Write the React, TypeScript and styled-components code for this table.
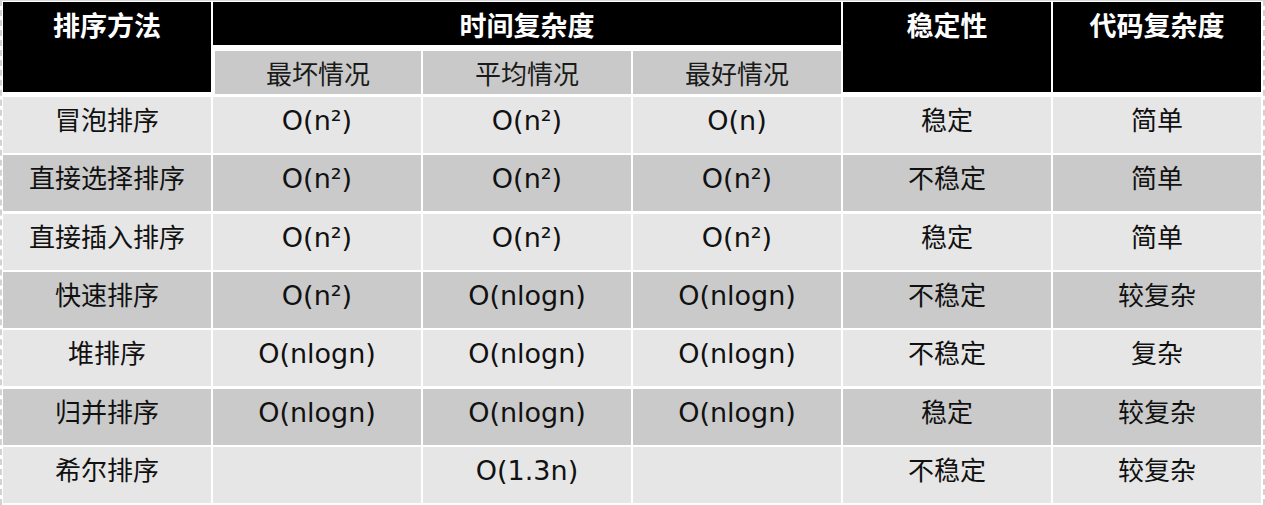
import React from 'react'
import styled, { createGlobalStyle } from 'styled-components'

const colWidth = 208;

const GlobalStyle = createGlobalStyle`
  html, body {
    margin: 0;
    background: #fff;
  }
`

const Page = styled.div`
  width: 1265px;
  height: 505px;
  box-sizing: border-box;
  border-top: 1px solid #d9d9d9;
  border-left: 2px dashed #d2d2d2;
  border-right: 2px dashed #d2d2d2;
  padding: 1px 0 0 1px;
  font-family: "DejaVu Sans", "Noto Sans CJK SC", sans-serif;
  overflow: hidden;
`

const Head = styled.div`
  display: grid;
  grid-template-columns: repeat(6, ${colWidth}px);
  grid-template-rows: 43px 43px;
  column-gap: 2px;
  row-gap: 6px;
`

const HeadCell = styled.div<{ $col: number; $span?: number; $rows?: number }>`
  grid-column: ${p => p.$col} / span ${p => p.$span ?? 1};
  grid-row: 1 / span ${p => p.$rows ?? 1};
  background: #000;
  color: #fff;
  font-family: "Noto Sans CJK SC", serif;
  font-weight: 700;
  font-size: 27px;
  line-height: 1;
  text-align: center;
  padding-top: 9px;
  ${p => p.$rows === 2 && 'margin-bottom: 2px;'}
`

const SubCell = styled.div<{ $col: number }>`
  grid-column: ${p => p.$col};
  grid-row: 2;
  background: #c9c9c9;
  color: #1a1a1a;
  font-family: "Noto Sans CJK SC", serif;
  font-size: 26px;
  line-height: 1;
  text-align: center;
  padding-top: 9px;
  margin-left: ${p => (p.$col === 2 ? 2 : 0)}px;
`

const Body = styled.div`
  display: grid;
  grid-template-columns: repeat(6, ${colWidth}px);
  grid-auto-rows: 56px;
  column-gap: 2px;
  row-gap: 2.35px;
  margin-top: 3px;
`

const Cell = styled.div<{ $dark: boolean; $latin?: boolean }>`
  background: ${p => (p.$dark ? '#cacaca' : '#e6e6e6')};
  color: #111;
  text-align: center;
  line-height: 1;
  ${p => p.$latin
    ? 'font-family: "DejaVu Sans", sans-serif; font-size: 27px; padding-top: 10px;'
    : 'font-family: "Noto Sans CJK SC", serif; font-size: 26px; padding-top: 9px;'}
`

const rows: string[][] = [
  ['冒泡排序', 'O(n²)', 'O(n²)', 'O(n)', '稳定', '简单'],
  ['直接选择排序', 'O(n²)', 'O(n²)', 'O(n²)', '不稳定', '简单'],
  ['直接插入排序', 'O(n²)', 'O(n²)', 'O(n²)', '稳定', '简单'],
  ['快速排序', 'O(n²)', 'O(nlogn)', 'O(nlogn)', '不稳定', '较复杂'],
  ['堆排序', 'O(nlogn)', 'O(nlogn)', 'O(nlogn)', '不稳定', '复杂'],
  ['归并排序', 'O(nlogn)', 'O(nlogn)', 'O(nlogn)', '稳定', '较复杂'],
  ['希尔排序', '', 'O(1.3n)', '', '不稳定', '较复杂'],
]

function SortTable() {
  return (
    <Page>
      <Head>
        <HeadCell $col={1} $rows={2}>排序方法</HeadCell>
        <HeadCell $col={2} $span={3}>时间复杂度</HeadCell>
        <HeadCell $col={5} $rows={2}>稳定性</HeadCell>
        <HeadCell $col={6} $rows={2}>代码复杂度</HeadCell>
        <SubCell $col={2}>最坏情况</SubCell>
        <SubCell $col={3}>平均情况</SubCell>
        <SubCell $col={4}>最好情况</SubCell>
      </Head>
      <Body>
        {rows.map((row, i) =>
          row.map((text, j) => (
            <Cell key={`${i}-${j}`} $dark={i % 2 === 1} $latin={j >= 1 && j <= 3}>
              {text}
            </Cell>
          ))
        )}
      </Body>
    </Page>
  )
}

export default function App() {
  return (
    <>
      <GlobalStyle />
      <SortTable />
    </>
  )
}
